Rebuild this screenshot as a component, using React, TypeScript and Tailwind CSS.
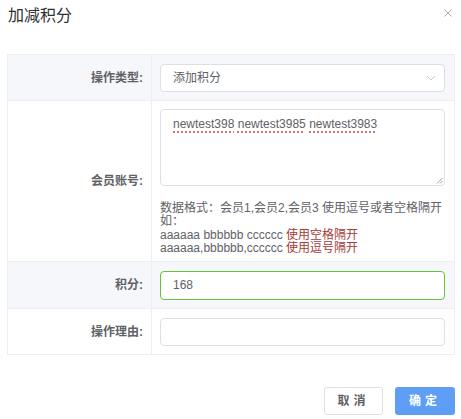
import React from "react";

const font = { fontFamily: '"Liberation Sans", "Noto Sans CJK SC", sans-serif' };

function Label({ children }: { children: React.ReactNode }) {
  return (
    <div className="flex w-[144px] shrink-0 items-center justify-end border-r border-[#ebeef5] pr-[8px] text-[12px] font-bold text-[#606266]">
      {children}
    </div>
  );
}

function Wavy({ children }: { children: React.ReactNode }) {
  return (
    <span className="underline decoration-[#e07070] decoration-dotted decoration-[1.5px] underline-offset-[3px]">
      {children}
    </span>
  );
}

export default function App() {
  return (
    <div className="relative h-[419px] w-[461px] bg-white" style={font}>
      <div className="flex h-[54px] items-start justify-between pl-[8px] pr-[9px] pt-[4px]">
        <h1 className="text-[16px] leading-[24px] text-[#303133]">加减积分</h1>
        <svg className="mt-[5px]" width="8" height="8" viewBox="0 0 8 8" fill="none">
          <path d="M0.5 0.5L7.5 7.5M7.5 0.5L0.5 7.5" stroke="#a8abb2" strokeWidth="1" />
        </svg>
      </div>

      <div className="mx-[7px] w-[448px] border border-[#ebeef5] text-[12px]">
        {/* 操作类型 */}
        <div className="flex h-[46px] border-b border-[#ebeef5] bg-[#f5f7fa]">
          <Label>操作类型:</Label>
          <div className="flex flex-1 items-center pl-[8px] pr-[9px]">
            <div className="flex h-[28px] w-full items-center justify-between rounded-[4px] border border-[#dcdfe6] bg-white pl-[12px] pr-[8px] text-[12px] text-[#606266]">
              <span>添加积分</span>
              <svg width="10" height="6" viewBox="0 0 10 6" fill="none">
                <path d="M1 1L5 5L9 1" stroke="#c8cbd2" strokeWidth="1" />
              </svg>
            </div>
          </div>
        </div>

        {/* 会员账号 */}
        <div className="flex h-[161px] border-b border-[#ebeef5] bg-white">
          <Label>会员账号:</Label>
          <div className="flex flex-1 flex-col pl-[8px] pr-[9px] pt-[8px]">
            <div className="relative h-[77px] w-full rounded-[4px] border border-[#dcdfe6] bg-white px-[12px] pt-[6px] text-[12px] leading-[16px] text-[#606266]">
              <Wavy>newtest398</Wavy> <Wavy>newtest3985</Wavy> <Wavy>newtest3983</Wavy>
              <svg className="absolute bottom-[1px] right-[1px]" width="7" height="7" viewBox="0 0 7 7" fill="none">
                <path d="M6.5 1L1 6.5M6.5 4L4 6.5" stroke="#888" strokeWidth="0.8" />
              </svg>
            </div>
            <div className="mt-[16px] text-[12px] leading-[13.4px] text-[#606266]">
              <div>数据格式：会员1,会员2,会员3 使用逗号或者空格隔开</div>
              <div>如：</div>
              <div>
                aaaaaa bbbbbb cccccc <span className="text-[#a33b36]">使用空格隔开</span>
              </div>
              <div>
                aaaaaa,bbbbbb,cccccc <span className="text-[#a33b36]">使用逗号隔开</span>
              </div>
            </div>
          </div>
        </div>

        {/* 积分 */}
        <div className="flex h-[47px] border-b border-[#ebeef5] bg-[#f5f7fa]">
          <Label>积分:</Label>
          <div className="flex flex-1 items-center pl-[8px] pr-[9px]">
            <div className="flex h-[29px] w-full items-center rounded-[4px] border border-[#67c23a] bg-white px-[12px] text-[12px] text-[#606266]">
              168
            </div>
          </div>
        </div>

        {/* 操作理由 */}
        <div className="flex h-[45px] bg-white">
          <Label>操作理由:</Label>
          <div className="flex flex-1 items-center pl-[8px] pr-[9px]">
            <div className="h-[28px] w-full rounded-[4px] border border-[#dcdfe6] bg-white" />
          </div>
        </div>
      </div>

      <div className="mt-[32px] flex justify-end gap-[12px] pr-[6px]">
        <button className="h-[28px] w-[59px] rounded-[3px] border border-[#dcdfe6] bg-white text-[12px] font-bold tracking-[4px] text-[#606266]">
          取消
        </button>
        <button className="h-[28px] w-[60px] rounded-[3px] bg-[#5e9ff5] text-[12px] font-bold tracking-[4px] text-white">
          确定
        </button>
      </div>
    </div>
  );
}
